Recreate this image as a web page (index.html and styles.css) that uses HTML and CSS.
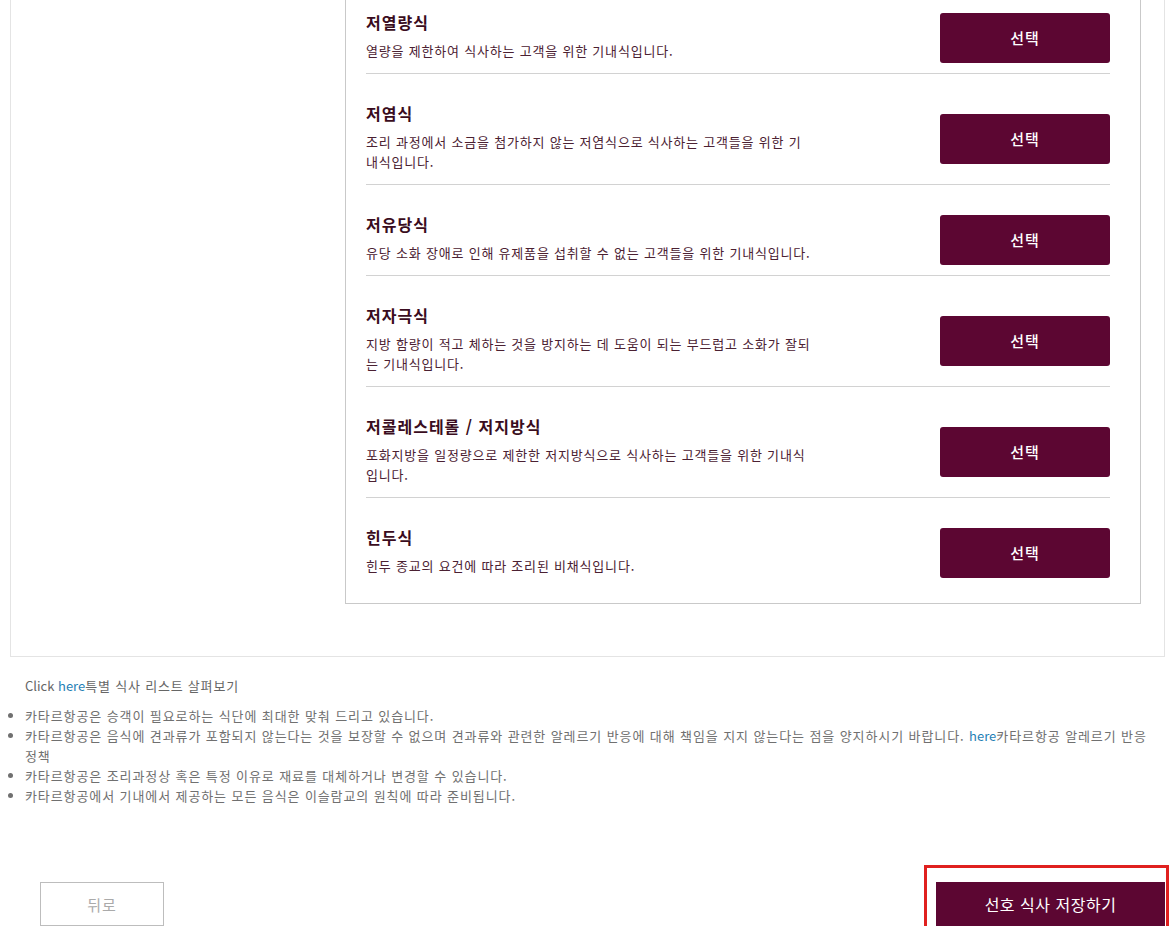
FILE: index.html
```html
<!DOCTYPE html>
<html lang="ko">
<head>
  <meta charset="utf-8">
  <title>특별 기내식 선택</title>
  <link rel="stylesheet" href="styles.css">
</head>
<body>
  <div class="page">
    <div class="meal-panel">
      <div class="meal-side"></div>

      <div class="meal-list">
        <div class="meal-row">
          <div class="meal-text">
            <h4>저열량식</h4>
            <p>열량을 제한하여 식사하는 고객을 위한 기내식입니다.</p>
          </div>
          <button type="button" class="select-btn">선택</button>
        </div>

        <div class="meal-row">
          <div class="meal-text">
            <h4>저염식</h4>
            <p>조리 과정에서 소금을 첨가하지 않는 저염식으로 식사하는 고객들을 위한 기내식입니다.</p>
          </div>
          <button type="button" class="select-btn">선택</button>
        </div>

        <div class="meal-row">
          <div class="meal-text">
            <h4>저유당식</h4>
            <p>유당 소화 장애로 인해 유제품을 섭취할 수 없는 고객들을 위한 기내식입니다.</p>
          </div>
          <button type="button" class="select-btn">선택</button>
        </div>

        <div class="meal-row">
          <div class="meal-text">
            <h4>저자극식</h4>
            <p>지방 함량이 적고 체하는 것을 방지하는 데 도움이 되는 부드럽고 소화가 잘되는 기내식입니다.</p>
          </div>
          <button type="button" class="select-btn">선택</button>
        </div>

        <div class="meal-row">
          <div class="meal-text">
            <h4>저콜레스테롤 / 저지방식</h4>
            <p>포화지방을 일정량으로 제한한 저지방식으로 식사하는 고객들을 위한 기내식입니다.</p>
          </div>
          <button type="button" class="select-btn">선택</button>
        </div>

        <div class="meal-row">
          <div class="meal-text">
            <h4>힌두식</h4>
            <p>힌두 종교의 요건에 따라 조리된 비채식입니다.</p>
          </div>
          <button type="button" class="select-btn">선택</button>
        </div>
      </div>
    </div>

    <p class="click-line">Click <a href="#">here</a><span class="ko">특별 식사 리스트 살펴보기</span></p>

    <ul class="notes">
      <li>카타르항공은 승객이 필요로하는 식단에 최대한 맞춰 드리고 있습니다.</li>
      <li>카타르항공은 음식에 견과류가 포함되지 않는다는 것을 보장할 수 없으며 견과류와 관련한 알레르기 반응에 대해 책임을 지지 않는다는 점을 양지하시기 바랍니다. <a href="#">here</a>카타르항공 알레르기 반응 정책</li>
      <li>카타르항공은 조리과정상 혹은 특정 이유로 재료를 대체하거나 변경할 수 있습니다.</li>
      <li>카타르항공에서 기내에서 제공하는 모든 음식은 이슬람교의 원칙에 따라 준비됩니다.</li>
    </ul>

    <div class="actions">
      <button type="button" class="back-btn">뒤로</button>
      <div class="save-wrap">
        <button type="button" class="save-btn">선호 식사 저장하기</button>
      </div>
    </div>
  </div>
</body>
</html>
```

FILE: styles.css
```css
body {
  margin: 0;
  padding: 0;
  background-color: #fff;
  font-family: "Noto Sans CJK KR", "Noto Sans", sans-serif;
  overflow: hidden;
}

.page {
  width: 1155px;
  margin: -49px 0 0 10px;
}

/* meal list panel */
.meal-panel {
  display: grid;
  grid-template-columns: 334px 1fr;
  padding: 30px 23px 52px 0;
  border: 1px solid #e4e4e4;
}

.meal-list {
  border: 1px solid #c9c9c9;
  padding: 0 30px 15px 20px;
}

.meal-row {
  display: flex;
  justify-content: space-between;
  align-items: center;
  padding: 27px 0 12px;
  border-bottom: 1px solid #d2d2d2;
}

.meal-row:last-child {
  border-bottom: none;
}

.meal-text {
  width: 447px;
}

.meal-text h4 {
  margin: 0 0 7px;
  font-size: 16px;
  line-height: 24px;
  font-weight: bold;
  letter-spacing: 1px;
  color: #3a0c20;
}

.meal-text p {
  margin: 0;
  font-size: 13px;
  line-height: 20px;
  letter-spacing: 0.8px;
  color: #4b2132;
}

.select-btn {
  width: 170px;
  height: 50px;
  margin: 2px 0 -2px;
  background-color: #5c0632;
  color: #fff;
  border: none;
  border-radius: 3px;
  font-family: inherit;
  font-size: 15px;
  font-weight: 500;
  letter-spacing: 1px;
  cursor: pointer;
}

/* notes under the panel */
.click-line {
  margin: 19px 0 0;
  padding-left: 15px;
  font-size: 13px;
  line-height: 20px;
  color: #666;
}

.click-line .ko {
  letter-spacing: 0.8px;
}

a {
  color: #1f7fb5;
  text-decoration: none;
  letter-spacing: 0;
}

.notes {
  margin: 10px 0 0;
  padding: 0 12px 0 15px;
  font-size: 13px;
  line-height: 20px;
  letter-spacing: 0.9px;
  color: #707070;
}

/* bottom buttons */
.actions {
  display: flex;
  justify-content: space-between;
  align-items: center;
  margin-top: 76px;
}

.back-btn {
  width: 124px;
  height: 44px;
  margin-left: 30px;
  background-color: #fff;
  border: 1px solid #bdbdbd;
  color: #aaa;
  font-family: inherit;
  font-size: 15px;
  letter-spacing: 1px;
  cursor: pointer;
}

.save-wrap {
  position: relative;
}

.save-btn {
  display: block;
  width: 229px;
  height: 44px;
  background-color: #5c0632;
  color: #fff;
  border: none;
  font-family: inherit;
  font-size: 16px;
  letter-spacing: 0.5px;
  cursor: pointer;
}

/* red highlight drawn over the save button */
.save-wrap::after {
  content: "";
  position: absolute;
  top: -17px;
  left: -12px;
  right: -4px;
  bottom: -7px;
  border: 3px solid #e0201f;
  pointer-events: none;
}
```
